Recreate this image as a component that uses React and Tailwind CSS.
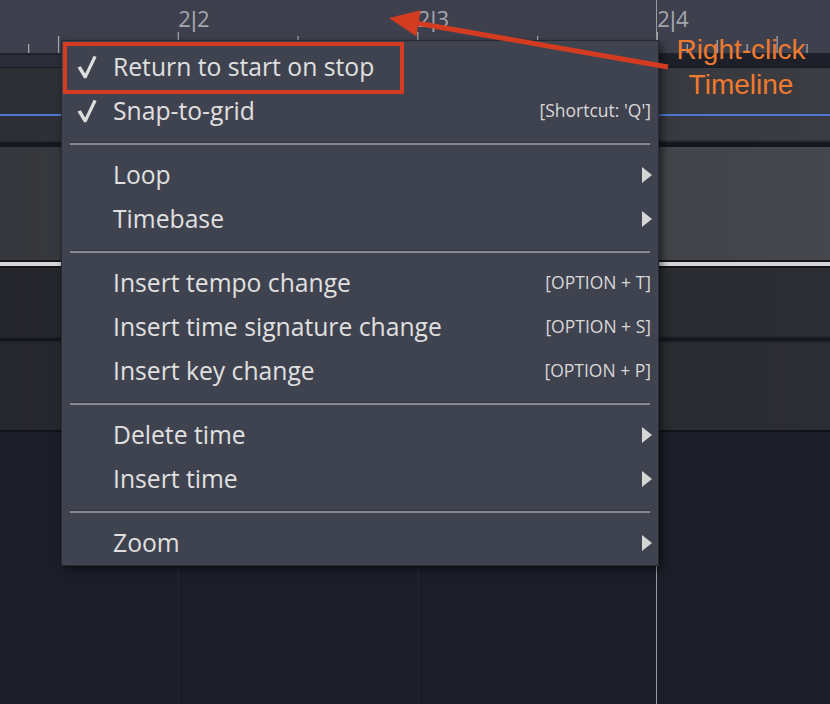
import React from 'react';

const BEAT_X = 178.3;
const STEP = 29.94;

const menuItems = [
  { check: true, label: 'Return to start on stop' },
  { check: true, label: 'Snap-to-grid', shortcut: "[Shortcut: 'Q']" },
  'sep',
  { label: 'Loop', sub: true },
  { label: 'Timebase', sub: true },
  'sep',
  { label: 'Insert tempo change', shortcut: '[OPTION + T]' },
  { label: 'Insert time signature change', shortcut: '[OPTION + S]' },
  { label: 'Insert key change', shortcut: '[OPTION + P]' },
  'sep',
  { label: 'Delete time', sub: true },
  { label: 'Insert time', sub: true },
  'sep',
  { label: 'Zoom', sub: true },
];

const CheckMark = () => (
  <svg width="20" height="24" viewBox="0 0 20 24" className="block">
    <path d="M0.5 12.5 L3.8 11.2 L8.2 18.6 L16.6 0.8 L19.6 2 L9.4 23.2 L7 23.2 Z" fill="#dedede" />
  </svg>
);

const SubArrow = () => (
  <svg width="10" height="16" viewBox="0 0 10 16" className="block">
    <path d="M0 0 L10 8 L0 16 Z" fill="#d6d6d6" />
  </svg>
);

const Ruler = () => {
  const ticks = [];
  for (let k = -6; k <= 22; k++) {
    const x = BEAT_X + k * STEP;
    const m = ((k % 8) + 8) % 8;
    const top = m === 0 ? 32 : m === 4 ? 36 : m % 2 === 0 ? 40 : 44;
    ticks.push(<line key={k} x1={x} y1={top} x2={x} y2={53} stroke="#a9abb2" strokeWidth="1.2" />);
  }
  const labels = [
    { x: 178.3, t: '2', b: '2' },
    { x: 417.8, t: '2', b: '3' },
    { x: 657.3, t: '2', b: '4' },
  ];
  return (
    <svg width="830" height="53" className="block">
      {ticks}
      {labels.map((l) => (
        <text key={l.b} x={l.x} y="27" fontSize="22" fill="#a4a6ad" fontFamily="'Open Sans', sans-serif">
          {l.t}
          <tspan fontFamily="'Liberation Sans', sans-serif" dx="0">|</tspan>
          <tspan dx="0.5">{l.b}</tspan>
        </text>
      ))}
    </svg>
  );
};

const Menu = () => (
  <div className="absolute left-[61px] top-[40px] w-[598px] border border-[#282a32] bg-[#3f424f] pt-[4px] shadow-[3px_3px_8px_rgba(0,0,0,0.55)]">
    {menuItems.map((item, i) =>
      item === 'sep' ? (
        <div key={i} className="flex h-[20px] items-center px-[8px]">
          <div className="h-[3px] w-full border-t border-[#30333d] bg-[#878a92]" />
        </div>
      ) : (
        <div key={i} className="flex h-[44px] items-center pl-[15px] pr-[6px]">
          <div className="w-[36px]">{item.check && <CheckMark />}</div>
          <span className="flex-1 text-[24.7px] leading-none text-[#e0e0e0]">{item.label}</span>
          {item.shortcut && <span className="pr-[1px] text-[17.5px] leading-none text-[#d8d8d8]">{item.shortcut}</span>}
          {item.sub && <SubArrow />}
        </div>
      )
    )}
  </div>
);

export default function App() {
  return (
    <div className="relative flex h-[704px] w-[830px] flex-col overflow-hidden bg-[#1b1e29] font-['Open_Sans',sans-serif]">
      {/* ruler */}
      <div className="h-[53px] shrink-0 bg-[#3e414d]">
        <Ruler />
      </div>

      {/* header band */}
      <div className="flex h-[14px] shrink-0 border-t-2 border-[#20232b]">
        <div className="w-[61px] bg-[#2b2e38]" />
        <div className="flex-1 bg-[#1d2029]" />
      </div>

      {/* track 1 with blue line */}
      <div className="flex h-[73px] shrink-0 flex-col justify-center border-t border-[#17191f] bg-gradient-to-r from-[#2e2f35] to-[#3b3c42]">
        <div className="mt-[22px] h-[2px] bg-[#4a78d2]" />
      </div>

      <div className="h-[7px] shrink-0 border-t-2 border-[#2b2d35] bg-[#15171e]" />

      {/* track 2 */}
      <div className="h-[113px] shrink-0 bg-gradient-to-r from-[#36373c] to-[#46474c]" />

      {/* white marker line */}
      <div className="h-[8px] shrink-0 border-y-2 border-[#14151a] bg-[#d6d6d8]" />

      {/* track 3 */}
      <div className="h-[68px] shrink-0 bg-gradient-to-r from-[#25262b] to-[#2c2d33]" />

      <div className="h-[7px] shrink-0 border-y-2 border-[#22242c] bg-[#14161d]" />

      {/* track 4 */}
      <div className="h-[89px] shrink-0 border-b-2 border-[#111319] bg-gradient-to-r from-[#26272c] to-[#2c2d33]" />

      {/* empty arrange area with grid */}
      <div className="relative flex-1 bg-[#1b1e29]">
        <div className="absolute bottom-0 left-[178px] top-0 w-px bg-[#232634]" />
        <div className="absolute bottom-0 left-[418px] top-0 w-px bg-[#232634]" />
      </div>

      {/* playhead / bar line */}
      <div className="absolute bottom-0 left-[655.5px] top-0 w-[1.5px] bg-[#9c9c9e]" />

      <Menu />

      {/* annotation: highlight box */}
      <div className="absolute left-[63px] top-[42px] h-[52px] w-[341px] border-4 border-[#d33c21]" />

      {/* annotation: arrow */}
      <svg className="absolute left-0 top-0" width="830" height="704" viewBox="0 0 830 704">
        <line x1="416" y1="23" x2="668" y2="67" stroke="#d33c21" strokeWidth="5" />
        <polygon points="389,18 420.7,10.2 416.3,36.2" fill="#d33c21" />
      </svg>

      {/* annotation: label */}
      <div className="absolute left-[661px] top-[32px] w-[160px] text-center font-['Liberation_Sans',Arial,sans-serif] text-[28px] leading-[35px] text-[#ef7a2e]">
        Right-click
        <br />
        Timeline
      </div>
    </div>
  );
}
